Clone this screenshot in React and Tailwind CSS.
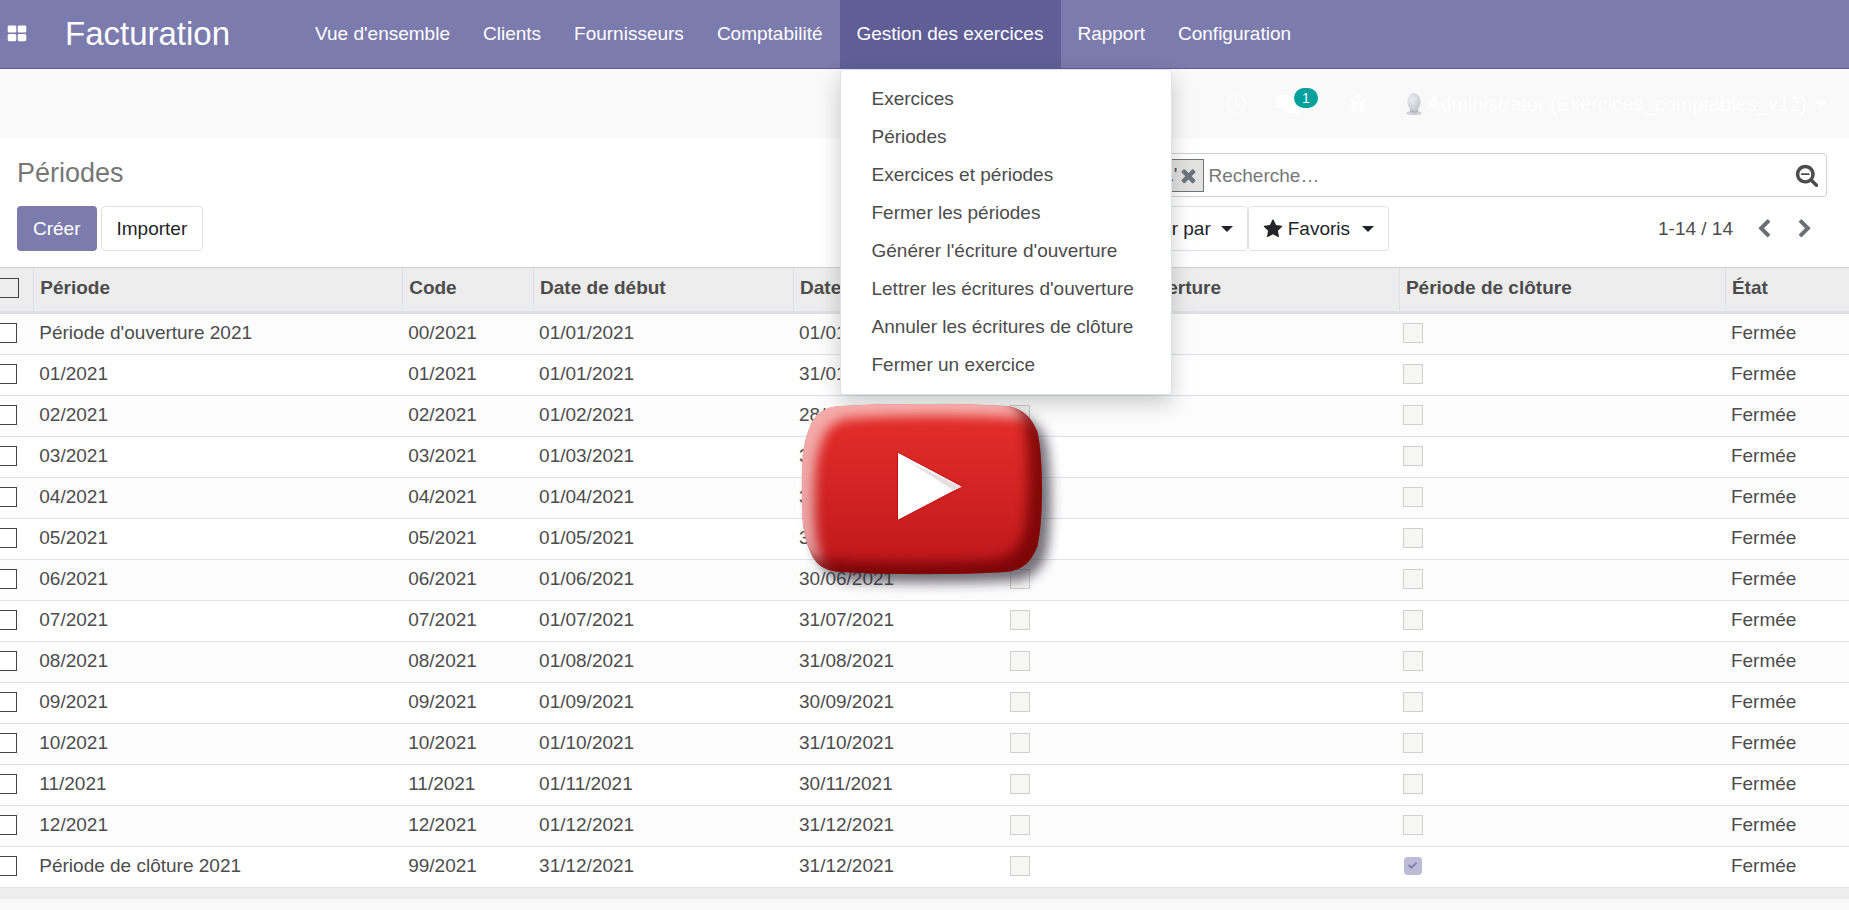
import React from "react";
import { FaRegClock, FaComments, FaBug, FaFilter, FaBars, FaCheck } from "react-icons/fa";

const ICONS = {
  apps: "M832 1024v384q0 52-38 90t-90 38h-512q-52 0-90-38t-38-90v-384q0-52 38-90t90-38h512q52 0 90 38t38 90zm0-768v384q0 52-38 90t-90 38h-512q-52 0-90-38t-38-90v-384q0-52 38-90t90-38h512q52 0 90 38t38 90zm896 768v384q0 52-38 90t-90 38h-512q-52 0-90-38t-38-90v-384q0-52 38-90t90-38h512q52 0 90 38t38 90zm0-768v384q0 52-38 90t-90 38h-512q-52 0-90-38t-38-90v-384q0-52 38-90t90-38h512q52 0 90 38t38 90z",
  times: "M1490 1322q0 40-28 68l-136 136q-28 28-68 28t-68-28l-294-294-294 294q-28 28-68 28t-68-28l-136-136q-28-28-28-68t28-68l294-294-294-294q-28-28-28-68t28-68l136-136q28-28 68-28t68 28l294 294 294-294q28-28 68-28t68 28l136 136q28 28 28 68t-28 68l-294 294 294 294q28 28 28 68z",
  searchMinus: "M1088 800v64q0 13-9.5 22.5t-22.5 9.5h-576q-13 0-22.5-9.5t-9.5-22.5v-64q0-13 9.5-22.5t22.5-9.5h576q13 0 22.5 9.5t9.5 22.5zm128 32q0-185-131.5-316.5t-316.5-131.5-316.5 131.5-131.5 316.5 131.5 316.5 316.5 131.5 316.5-131.5 131.5-316.5zm512 832q0 53-37.5 90.5t-90.5 37.5q-54 0-90-38l-343-342q-179 124-399 124-143 0-273.5-55.5t-225-150-150-225-55.5-273.5 55.5-273.5 150-225 225-150 273.5-55.5 273.5 55.5 225 150 150 225 55.5 273.5q0 220-124 399l343 343q37 37 37 90z",
  star: "M1728 647q0 22-26 48l-363 354 86 500q1 7 1 20 0 21-10.5 35.5t-30.5 14.5q-19 0-40-12l-449-236-449 236q-22 12-40 12-21 0-31.5-14.5t-10.5-35.5q0-6 2-20l86-500-364-354q-25-27-25-48 0-37 56-46l502-73 225-455q19-41 49-41t49 41l225 455 502 73q56 9 56 46z",
  left: "M1427 301l-531 531 531 531q19 19 19 45t-19 45l-166 166q-19 19-45 19t-45-19l-742-742q-19-19-19-45t19-45l742-742q19-19 45-19t45 19l166 166q19 19 19 45t-19 45z",
  right: "M1363 877l-742 742q-19 19-45 19t-45-19l-166-166q-19-19-19-45t19-45l531-531-531-531q-19-19-19-45t19-45l166-166q19-19 45-19t45 19l742 742q19 19 19 45t-19 45z",
};

function Icon({ name, className }) {
  return (
    <svg viewBox="0 0 1792 1792" className={className} fill="currentColor" aria-hidden="true">
      <path d={ICONS[name]} />
    </svg>
  );
}

function Caret() {
  return (
    <svg viewBox="0 0 12 6" className="h-[6px] w-3 shrink-0" fill="currentColor" aria-hidden="true">
      <path d="M0 0h12L6 6z" />
    </svg>
  );
}

const MENU = [
  "Exercices",
  "Périodes",
  "Exercices et périodes",
  "Fermer les périodes",
  "Générer l'écriture d'ouverture",
  "Lettrer les écritures d'ouverture",
  "Annuler les écritures de clôture",
  "Fermer un exercice",
];

const NAV_LEFT = ["Vue d'ensemble", "Clients", "Fournisseurs", "Comptabilité"];
const NAV_RIGHT = ["Rapport", "Configuration"];

const MONTH_ENDS = [31, 28, 31, 30, 31, 30, 31, 31, 30, 31, 30, 31];
const ROWS = [
  { name: "Période d'ouverture 2021", code: "00/2021", start: "01/01/2021", end: "01/01/2021", opening: true },
  ...MONTH_ENDS.map((day, i) => {
    const m = String(i + 1).padStart(2, "0");
    return { name: `${m}/2021`, code: `${m}/2021`, start: `01/${m}/2021`, end: `${day}/${m}/2021` };
  }),
  { name: "Période de clôture 2021", code: "99/2021", start: "31/12/2021", end: "31/12/2021", closing: true },
];

function NavLink({ children }) {
  return (
    <a href="#" className="flex items-center pl-[15px] pr-[17px]">
      {children}
    </a>
  );
}

function Flag({ checked, label }) {
  return (
    <span className="grid h-5 w-5 place-items-center">
      <input
        type="checkbox"
        disabled
        defaultChecked={checked}
        aria-label={label}
        className="col-start-1 row-start-1 h-5 w-5 appearance-none border border-[#cfcfcf] bg-[#f6f6f5] checked:h-[18px] checked:w-[18px] checked:rounded checked:border-0 checked:bg-[#bdbcd8]"
      />
      {checked && <FaCheck className="col-start-1 row-start-1 h-[9px] w-[9px] text-[#7c7bad]" />}
    </span>
  );
}

const selectBox = "block h-5 w-5 appearance-none border border-[#444]";
const th = "border-l border-[#dee2e6] pl-[6px] text-left font-bold";
const tool = "flex h-[45px] items-center rounded border border-[#dee2e6] bg-white px-[14px] text-[#212529]";

const BUTTON_SHAPE =
  "M0 85C0 56 2 38 8 24C14 8 24 3 40 2C92 -1 150 -1 204 2C220 3 230 13 236 28C242 54 242 116 236 142C230 158 220 167 204 168C150 171 92 171 40 168C24 167 14 162 8 146C2 132 0 114 0 85Z";

function PlayButton() {
  return (
    <button
      type="button"
      aria-label="Lire la vidéo"
      className="absolute left-[calc(50%-3px)] top-[404px] z-30 h-[170px] w-[241px] -translate-x-1/2"
    >
      <svg viewBox="0 0 241 170" className="block h-full w-full overflow-visible">
        <defs>
          <linearGradient id="face" x1="0" y1="0" x2="0" y2="1">
            <stop offset="0" stopColor="#e72f2a" />
            <stop offset="1" stopColor="#bd171c" />
          </linearGradient>
          <clipPath id="edge">
            <path d={BUTTON_SHAPE} />
          </clipPath>
          <filter id="soft" x="-30%" y="-30%" width="160%" height="160%">
            <feGaussianBlur stdDeviation="6" />
          </filter>
        </defs>
        <path d={BUTTON_SHAPE} transform="translate(9 9)" fill="#2b2636" opacity="0.65" filter="url(#soft)" />
        <g clipPath="url(#edge)">
          <rect width="241" height="170" fill="url(#face)" />
          <path
            d={"M-60 -60H320V250H-60Z" + BUTTON_SHAPE}
            transform="translate(13 12)"
            fillRule="evenodd"
            fill="#fff"
            opacity="0.6"
            filter="url(#soft)"
          />
          <path
            d={"M-60 -60H320V250H-60Z" + BUTTON_SHAPE}
            transform="translate(-14 -12)"
            fillRule="evenodd"
            fill="#680406"
            opacity="0.75"
            filter="url(#soft)"
          />
        </g>
        <path d="M96 48L161 82.500L96 116.500Z" fill="#fff" stroke="#c20e12" strokeWidth="1" />
        <path d="M108 58L156 81L160 83L152 86.500Z" fill="#e8dfe0" />
      </svg>
    </button>
  );
}

export default function App() {
  return (
    <div className="relative min-h-screen overflow-hidden bg-[#f9f9f9] font-['Liberation_Sans',Arial,sans-serif] text-[19px] leading-7 text-[#4c4c4c]">
      <header>
        <div className="flex h-[69px] border-b border-[#5f5e97] bg-[#7c7bad] text-white">
          <button type="button" aria-label="Applications" className="flex items-center pl-[7px]">
            <Icon name="apps" className="h-5 w-5" />
          </button>
          <a href="#" className="flex w-[273px] items-center pl-[38px] text-[33px]">
            Facturation
          </a>
          <nav className="flex gap-px">
            {NAV_LEFT.map((item) => (
              <NavLink key={item}>{item}</NavLink>
            ))}
            <div className="relative flex bg-[#5f5e97]">
              <button type="button" aria-expanded="true" className="pl-4 pr-[18px]">
                Gestion des exercices
              </button>
              <ul className="absolute left-0 top-full z-20 mt-px w-[332px] rounded border border-[#dee2e6] bg-white py-[10px] text-[#4c4c4c] shadow-[0_8px_22px_rgba(0,0,0,0.2)]">
                {MENU.map((item) => (
                  <li key={item}>
                    <a href="#" className="flex h-[38px] items-center px-[30px] whitespace-nowrap">
                      {item}
                    </a>
                  </li>
                ))}
              </ul>
            </div>
            {NAV_RIGHT.map((item) => (
              <NavLink key={item}>{item}</NavLink>
            ))}
          </nav>
        </div>

        <div className="flex h-[69px] items-center justify-end pr-[22px] text-white">
          <button type="button" aria-label="Activités" className="mr-[30px] opacity-70">
            <FaRegClock className="h-5 w-5" />
          </button>
          <button type="button" aria-label="Discussions" className="relative mr-[50px]">
            <FaComments className="h-[22px] w-[23px]" />
            <span className="absolute -top-[5px] left-[18px] flex h-5 w-6 items-center justify-center rounded-full bg-[#00a09d] text-[14px]">
              1
            </span>
          </button>
          <button type="button" aria-label="Débogage" className="mr-[38px]">
            <FaBug className="h-[18px] w-[18px]" />
          </button>
          <button type="button" className="flex items-center">
            <svg viewBox="0 0 18 24" className="mr-1 h-6 w-[18px]" aria-hidden="true">
              <defs>
                <radialGradient id="head" cx="0.35" cy="0.35" r="0.8">
                  <stop offset="0" stopColor="#eceef1" />
                  <stop offset="1" stopColor="#bcc2ca" />
                </radialGradient>
              </defs>
              <path d="M1 21c2-3 14-3 16 0c0 3-16 3-16 0z" fill="#cfd3d9" />
              <path d="M5 17h8v3c-2 1.500-6 1.500-8 0z" fill="#b3b9c2" />
              <ellipse cx="9" cy="10" rx="6.500" ry="9" fill="url(#head)" />
            </svg>
            <span className="mr-2 text-[20px]">Administrator (Exercices_comptables_v12)</span>
            <Caret />
          </button>
        </div>
      </header>

      <section className="flex h-[130px] border-b border-[#cfcfcf] bg-white">
        <div className="w-1/2 pl-[17px] pt-5">
          <h1 className="text-[27px] leading-[30px] text-[#777]">Périodes</h1>
          <div className="mt-[18px] flex gap-1">
            <button type="button" className="h-[45px] rounded bg-[#7c7bad] px-4 text-white">
              Créer
            </button>
            <button type="button" className="h-[45px] rounded border border-[#dee2e6] bg-white px-[15px] text-[#212529]">
              Importer
            </button>
          </div>
        </div>
        <div className="w-1/2 pr-[22px] pt-[15px]">
          <div className="flex h-11 items-center rounded border border-[#cfcfcf] pl-1 pr-[7px]">
            <div className="flex h-[33px] w-[274px] shrink-0 items-center justify-end border border-[#6c757d] bg-[#e2e2e0] pr-1">
              <span className="whitespace-nowrap">Exercice &#39;2021&#39;</span>
              <button type="button" aria-label="Retirer le filtre">
                <Icon name="times" className="h-[21px] w-[21px] text-[#6c757d]" />
              </button>
            </div>
            <input
              type="text"
              aria-label="Recherche"
              placeholder="Recherche…"
              className="ml-[5px] h-full min-w-0 flex-1 bg-transparent pt-[2px] outline-none placeholder:text-[#777]"
            />
            <button type="button" aria-label="Masquer les filtres">
              <Icon name="searchMinus" className="h-6 w-6" />
            </button>
          </div>
          <div className="mt-[9px] flex items-center justify-between">
            <div className="flex">
              <button type="button" className={tool}>
                <FaFilter className="mr-[6px] h-4 w-4" />
                Filtres
                <span className="ml-[11px]"><Caret /></span>
              </button>
              <button type="button" className={tool}>
                <FaBars className="mr-[6px] h-4 w-4" />
                Regrouper par
                <span className="ml-[10px]"><Caret /></span>
              </button>
              <button type="button" className={tool}>
                <Icon name="star" className="mr-[5px] h-5 w-5" />
                Favoris
                <span className="ml-3"><Caret /></span>
              </button>
            </div>
            <div className="flex items-center pr-3">
              <span className="mr-[21px]">1-14 / 14</span>
              <button type="button" aria-label="Page précédente" className="mr-[21px]">
                <Icon name="left" className="h-5 w-5 text-[#6c6f73]" />
              </button>
              <button type="button" aria-label="Page suivante">
                <Icon name="right" className="h-5 w-5 text-[#6c6f73]" />
              </button>
            </div>
          </div>
        </div>
      </section>

      <table className="w-full table-fixed border-separate border-spacing-0 border-b-[11px] border-[#ededed]">
        <colgroup>
          <col className="w-[1.8%]" />
          <col className="w-[19.95%]" />
          <col className="w-[7.08%]" />
          <col className="w-[14.06%]" />
          <col className="w-[11.52%]" />
          <col className="w-[21.25%]" />
          <col className="w-[17.63%]" />
          <col />
        </colgroup>
        <thead>
          <tr className="h-[46px] bg-[#ededed] *:border-b-[3px] *:border-b-[#dee2e6] *:pt-0 *:pb-[3px]">
            <th>
              <input type="checkbox" aria-label="Tout sélectionner" className={selectBox + " -ml-px"} />
            </th>
            <th className={th}>Période</th>
            <th className={th}>Code</th>
            <th className={th}>Date de début</th>
            <th className={th}>Date de fin</th>
            <th className={th}>Période de réouverture</th>
            <th className={th}>Période de clôture</th>
            <th className={th}>État</th>
          </tr>
        </thead>
        <tbody>
          {ROWS.map((row) => (
            <tr
              key={row.name}
              className="h-[41px] odd:bg-[#fcfcfc] even:bg-white *:border-b *:border-[#dee2e6] *:pb-[3px]"
            >
              <td>
                <input type="checkbox" aria-label={"Sélectionner " + row.name} className={selectBox + " -ml-[3px] bg-white"} />
              </td>
              <td className="pl-[6px]">{row.name}</td>
              <td className="pl-[6px]">{row.code}</td>
              <td className="pl-[6px]">{row.start}</td>
              <td className="pl-[6px]">{row.end}</td>
              <td className="pl-1">
                <Flag checked={row.opening} label="Période d'ouverture" />
              </td>
              <td className="pl-1">
                <Flag checked={row.closing} label="Période de clôture" />
              </td>
              <td className="pl-[6px]">Fermée</td>
            </tr>
          ))}
        </tbody>
      </table>

      <PlayButton />
    </div>
  );
}
